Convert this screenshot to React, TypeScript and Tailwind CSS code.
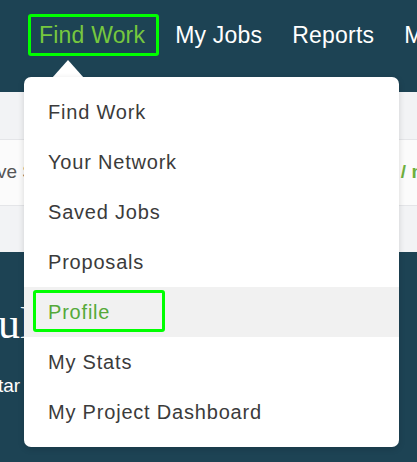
import React from 'react'

const NAV = ['Find Work', 'My Jobs', 'Reports', 'Messages']

const MENU = [
  'Find Work',
  'Your Network',
  'Saved Jobs',
  'Proposals',
  'Profile',
  'My Stats',
  'My Project Dashboard',
]

const sans = { fontFamily: '"Liberation Sans", Arial, sans-serif' }

export default function App() {
  return (
    <div
      className="relative h-[462px] w-[417px] overflow-hidden bg-[#1d4354]"
      style={sans}
    >
      {/* top nav */}
      <div className="flex h-[92px] gap-[30px] whitespace-nowrap pl-[39px] pt-[24px] text-[23px] leading-[23px] tracking-[0.2px] text-white">
        {NAV.map((item, i) => (
          <span key={item} className={i === 0 ? 'text-[#76c83e]' : ''}>
            {item}
          </span>
        ))}
      </div>

      {/* page behind the menu */}
      <div className="h-[48px] border-b border-[#e4e5e8] bg-[#f2f3f5]" />
      <div className="flex h-[65px] items-center justify-between overflow-hidden whitespace-nowrap bg-[#fbfbfb] text-[19px]">
        <span className="ml-[-3px] text-[#555]">ve S</span>
        <span className="mr-[-6px] font-bold text-[#6fb13f]">/ n</span>
      </div>
      <div className="h-[47px] border-t border-[#e4e5e8] bg-[#f2f3f5]" />
      <div className="whitespace-nowrap pt-[50px] text-white">
        <div
          className="ml-[-2px] text-[44px] leading-[44px]"
          style={{ fontFamily: '"Liberation Serif", "Times New Roman", serif' }}
        >
          ul
        </div>
        <div className="ml-[-2px] mt-[26px] text-[19px]">tar</div>
      </div>

      {/* caret */}
      <svg
        className="absolute left-[52px] top-[59px]"
        width="32"
        height="19"
        viewBox="0 0 32 19"
      >
        <path d="M0 19 L16 1 L32 19 Z" fill="#ffffff" />
      </svg>

      {/* dropdown */}
      <div className="absolute left-[24px] top-[77px] w-[375px] rounded-[7px] bg-white py-[10px] shadow-[0_2px_6px_rgba(0,0,0,0.15)]">
        {MENU.map((item) => {
          const active = item === 'Profile'
          return (
            <div
              key={item}
              className={`relative flex h-[50px] items-center pl-[24px] text-[20px] tracking-[0.8px] ${
                active ? 'bg-[#f1f1f1] text-[#55a93a]' : 'text-[#3b3b3b]'
              }`}
            >
              {item}
              {active && (
                <div className="absolute left-[9px] top-[3px] h-[42px] w-[132px] rounded-[3px] border-[3px] border-[#00ff00]" />
              )}
            </div>
          )
        })}
      </div>

      {/* highlight box on nav item */}
      <div className="absolute left-[28px] top-[14px] h-[42px] w-[131px] rounded-[3px] border-[3px] border-[#00ff00]" />
    </div>
  )
}
